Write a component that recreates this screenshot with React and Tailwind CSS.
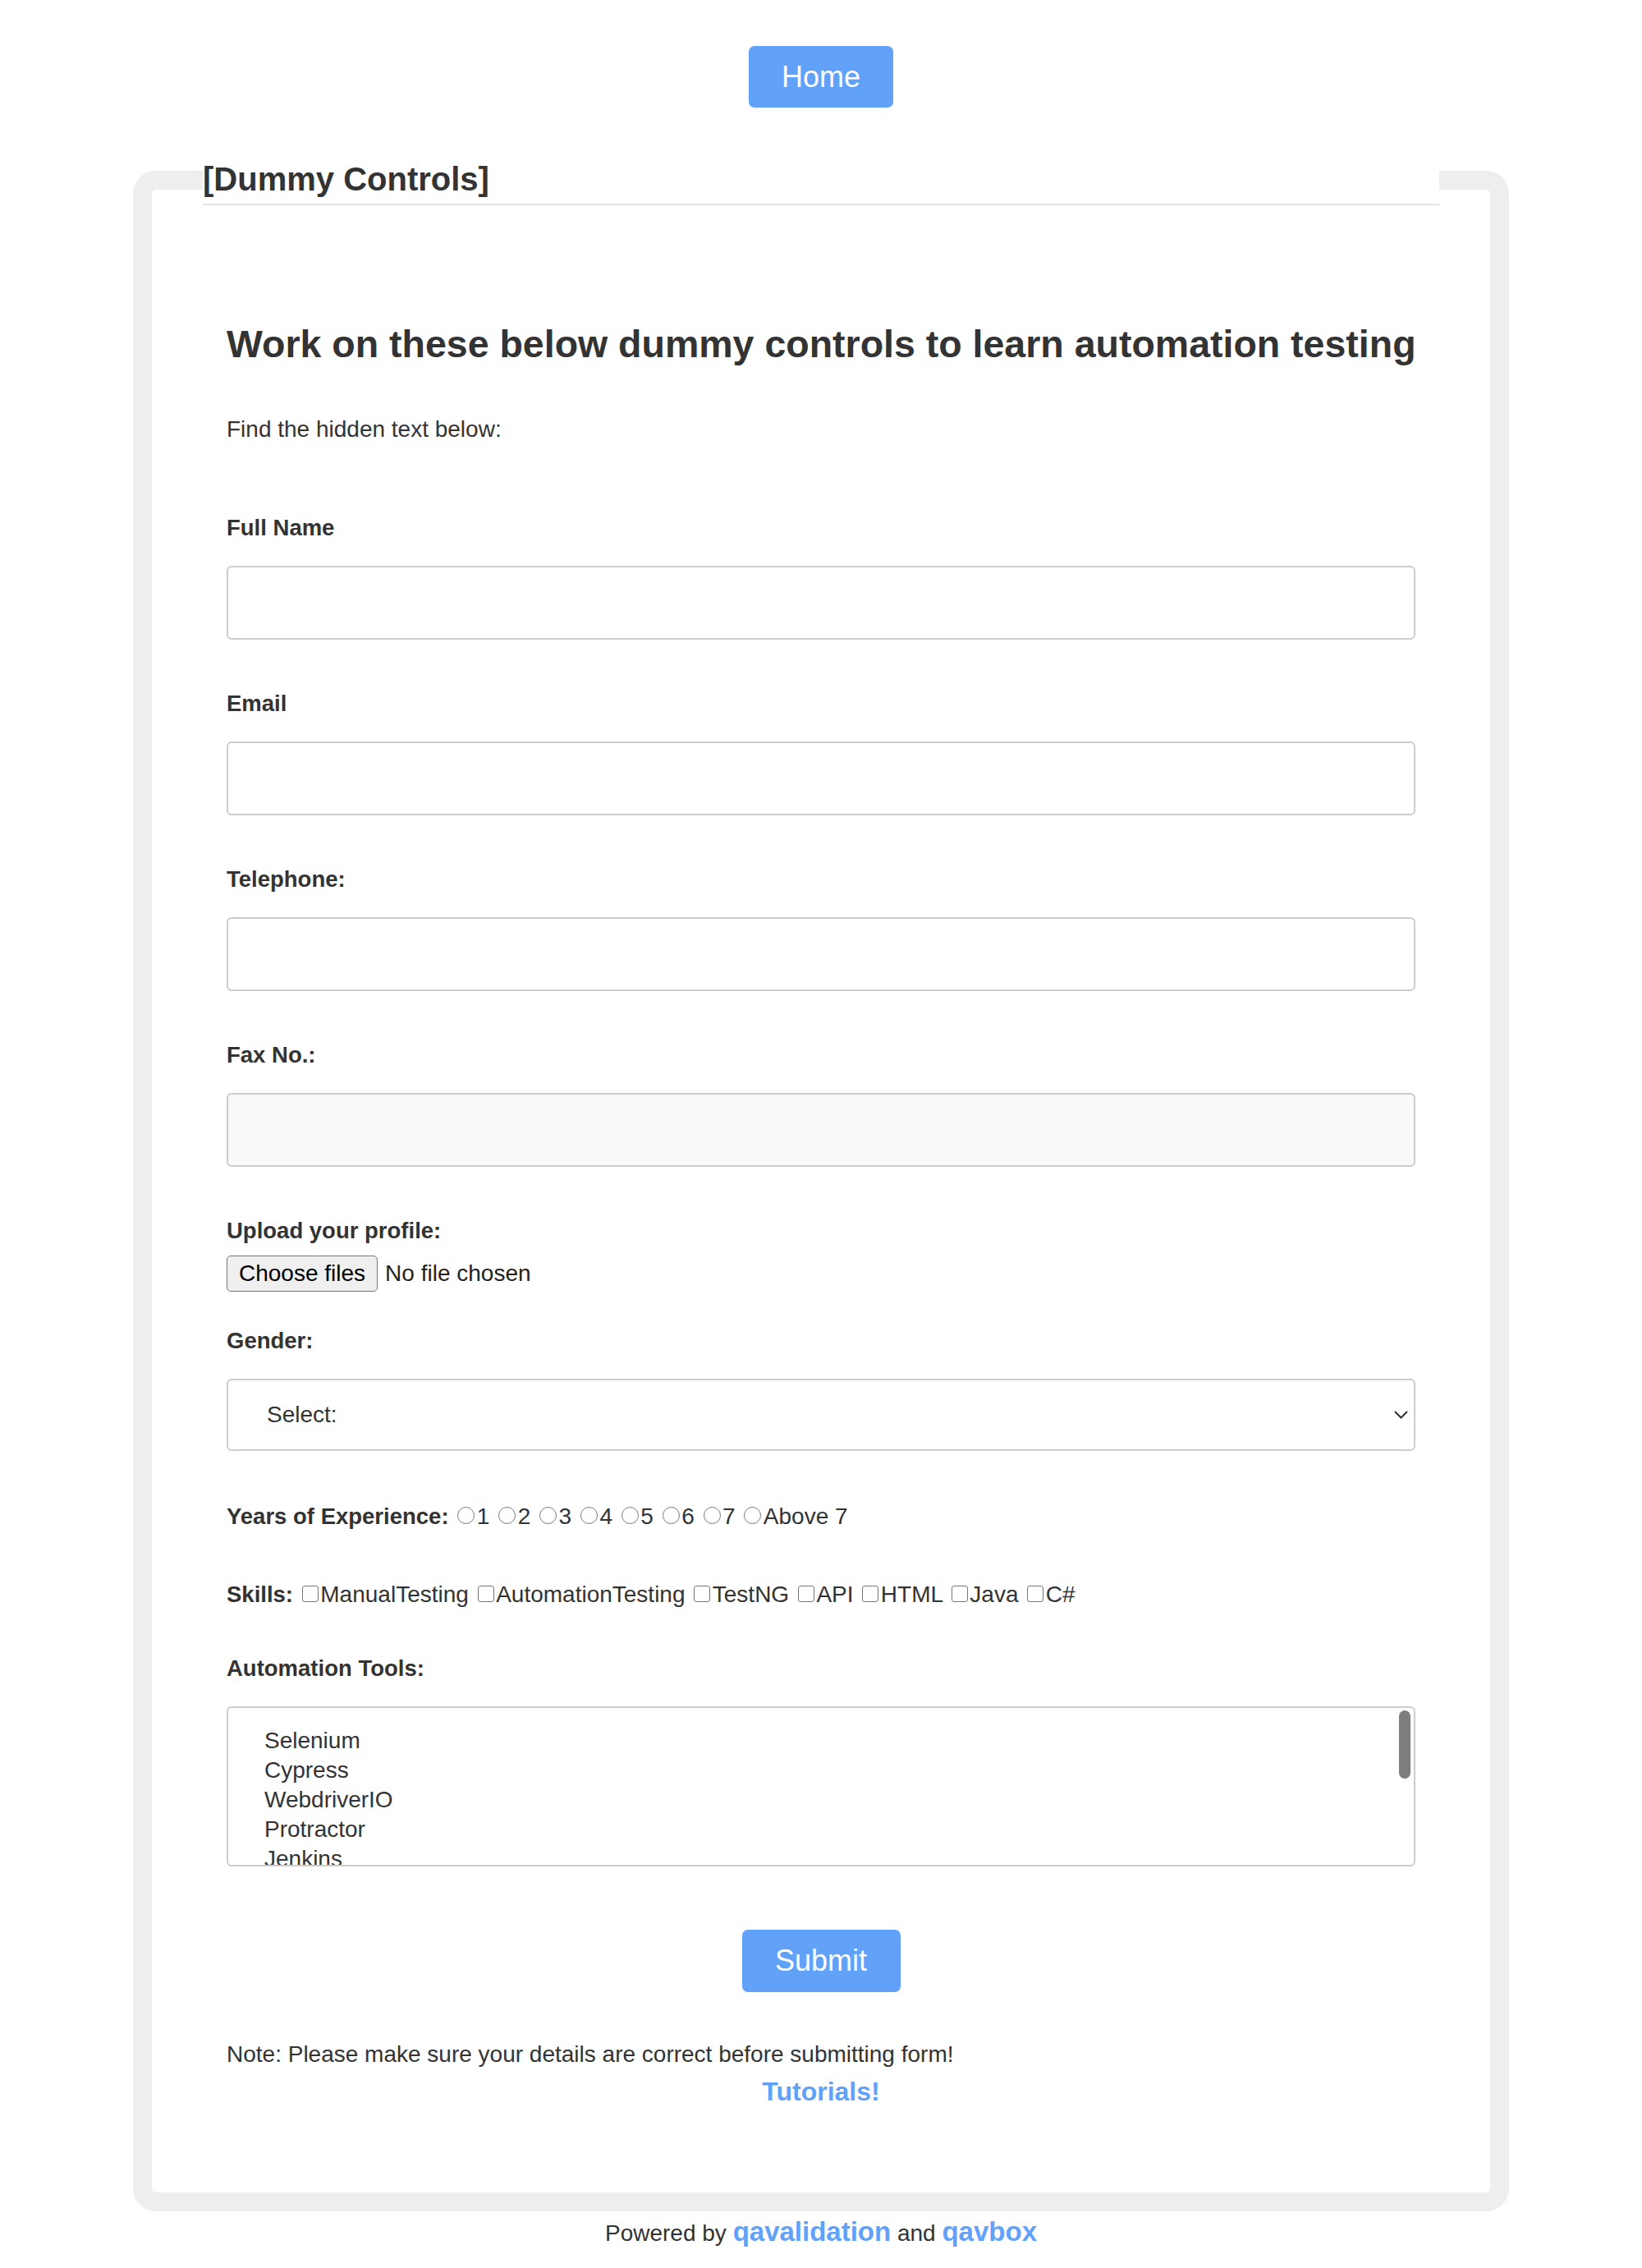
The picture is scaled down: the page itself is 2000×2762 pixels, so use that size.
import React from "react";

function Field({ label, disabled, first }) {
  return (
    <div className={first ? "mt-[88px]" : "mt-[62px]"}>
      <div className="text-[27.5px] font-bold leading-[32px]">{label}</div>
      <div
        className={
          "mt-[30px] h-[90px] border-2 border-[#cccccc] rounded-[6px] " +
          (disabled ? "bg-[#f9f9f9]" : "bg-white")
        }
      />
    </div>
  );
}

function Radio() {
  return (
    <span className="inline-block w-[21px] h-[21px] rounded-full border-[1.5px] border-[#777777] ml-[3px] mr-[2.5px]" />
  );
}

function Check() {
  return (
    <span className="inline-block w-[20px] h-[20px] rounded-[3px] border-[1.5px] border-[#777777] ml-[3px] mr-[2.5px]" />
  );
}

export default function App() {
  const years = ["1", "2", "3", "4", "5", "6", "7", "Above 7"];
  const skills = ["ManualTesting", "AutomationTesting", "TestNG", "API", "HTML", "Java", "C#"];
  const tools = ["Selenium", "Cypress", "WebdriverIO", "Protractor", "Jenkins", "Appium"];

  return (
    <div className="min-h-[2762px] bg-white font-['Liberation_Sans',Arial,sans-serif] text-[#333333]">
      <div className="flex justify-center pt-[56px]">
        <a className="flex items-center justify-center w-[176px] h-[75px] rounded-[7px] bg-[#62a1f8] text-white text-[36px]">
          Home
        </a>
      </div>

      <fieldset className="w-[1676px] mx-auto mt-[58px] border-[23px] border-[#eeeeee] rounded-[28px] px-[62px] py-0 min-w-0">
        <legend className="w-full p-0 border-b-2 border-[#e5e5e5] text-[40px] font-bold leading-[59px] text-[#333333]">
          [Dummy Controls]
        </legend>

        <div className="px-[29px] pt-[142px] pb-[104px]">
          <h2 className="text-[46.5px] font-bold leading-[54px] whitespace-nowrap">
            Work on these below dummy controls to learn automation testing
          </h2>
          <p className="mt-[61px] text-[28px] leading-[32px]">Find the hidden text below:</p>

          <Field label="Full Name" first />
          <Field label="Email" />
          <Field label="Telephone:" />
          <Field label="Fax No.:" disabled />

          <div className="mt-[62px]">
            <div className="text-[27.5px] font-bold leading-[32px]">Upload your profile:</div>
            <div className="mt-[14px] flex items-center h-[44px]">
              <span className="flex items-center h-[44px] px-[14px] bg-[#efefef] border-[1.5px] border-[#767676] rounded-[5px] text-black text-[28px]">
                Choose files
              </span>
              <span className="ml-[9px] text-[28px] text-[#222222]">No file chosen</span>
            </div>
          </div>

          <div className="mt-[44px]">
            <div className="text-[27.5px] font-bold leading-[32px]">Gender:</div>
            <div className="mt-[30px] h-[88px] border-2 border-[#cccccc] rounded-[6px] flex items-center justify-between pl-[47px] pr-[7px]">
              <span className="text-[28px] text-[#333333]">Select:</span>
              <svg width="17" height="10" viewBox="0 0 17 10" fill="none">
                <polyline points="1,1 8.5,8.5 16,1" stroke="#333333" strokeWidth="2" fill="none" />
              </svg>
            </div>
          </div>

          <div className="mt-[64px] text-[28px] leading-[32px] whitespace-nowrap">
            <span className="text-[27.5px] font-bold">Years of Experience:</span>
            {years.map((y) => (
              <React.Fragment key={y}>
                {" "}
                <Radio />
                {y}
              </React.Fragment>
            ))}
          </div>

          <div className="mt-[63px] text-[28px] leading-[32px] whitespace-nowrap">
            <span className="text-[27.5px] font-bold">Skills:</span>
            {skills.map((s) => (
              <React.Fragment key={s}>
                {" "}
                <Check />
                {s}
              </React.Fragment>
            ))}
          </div>

          <div className="mt-[58px] text-[27.5px] font-bold leading-[32px]">Automation Tools:</div>
          <div className="relative mt-[30px] h-[195px] border-2 border-[#cccccc] rounded-[6px] overflow-hidden pt-[22px] pl-[44px]">
            {tools.map((t) => (
              <div key={t} className="text-[28px] leading-[36px] text-[#333333]">
                {t}
              </div>
            ))}
            <div className="absolute right-[4px] top-[3px] w-[14px] h-[83px] rounded-full bg-[#7d7d7d]" />
          </div>

          <div className="mt-[77px] flex justify-center">
            <button className="flex items-center justify-center w-[193px] h-[76px] rounded-[7px] bg-[#62a1f8] text-white text-[36px]">
              Submit
            </button>
          </div>

          <p className="mt-[60px] text-[28px] leading-[32px]">
            Note: Please make sure your details are correct before submitting form!
          </p>
          <div className="mt-[10px] text-center">
            <a className="text-[32px] font-bold leading-[38px] text-[#62a1f8]">Tutorials!</a>
          </div>
        </div>
      </fieldset>

      <div className="mt-[5px] text-center text-[28px] leading-[40px]">
        Powered by <a className="text-[33px] font-bold text-[#62a1f8]">qavalidation</a> and{" "}
        <a className="text-[33px] font-bold text-[#62a1f8]">qavbox</a>
      </div>
    </div>
  );
}
